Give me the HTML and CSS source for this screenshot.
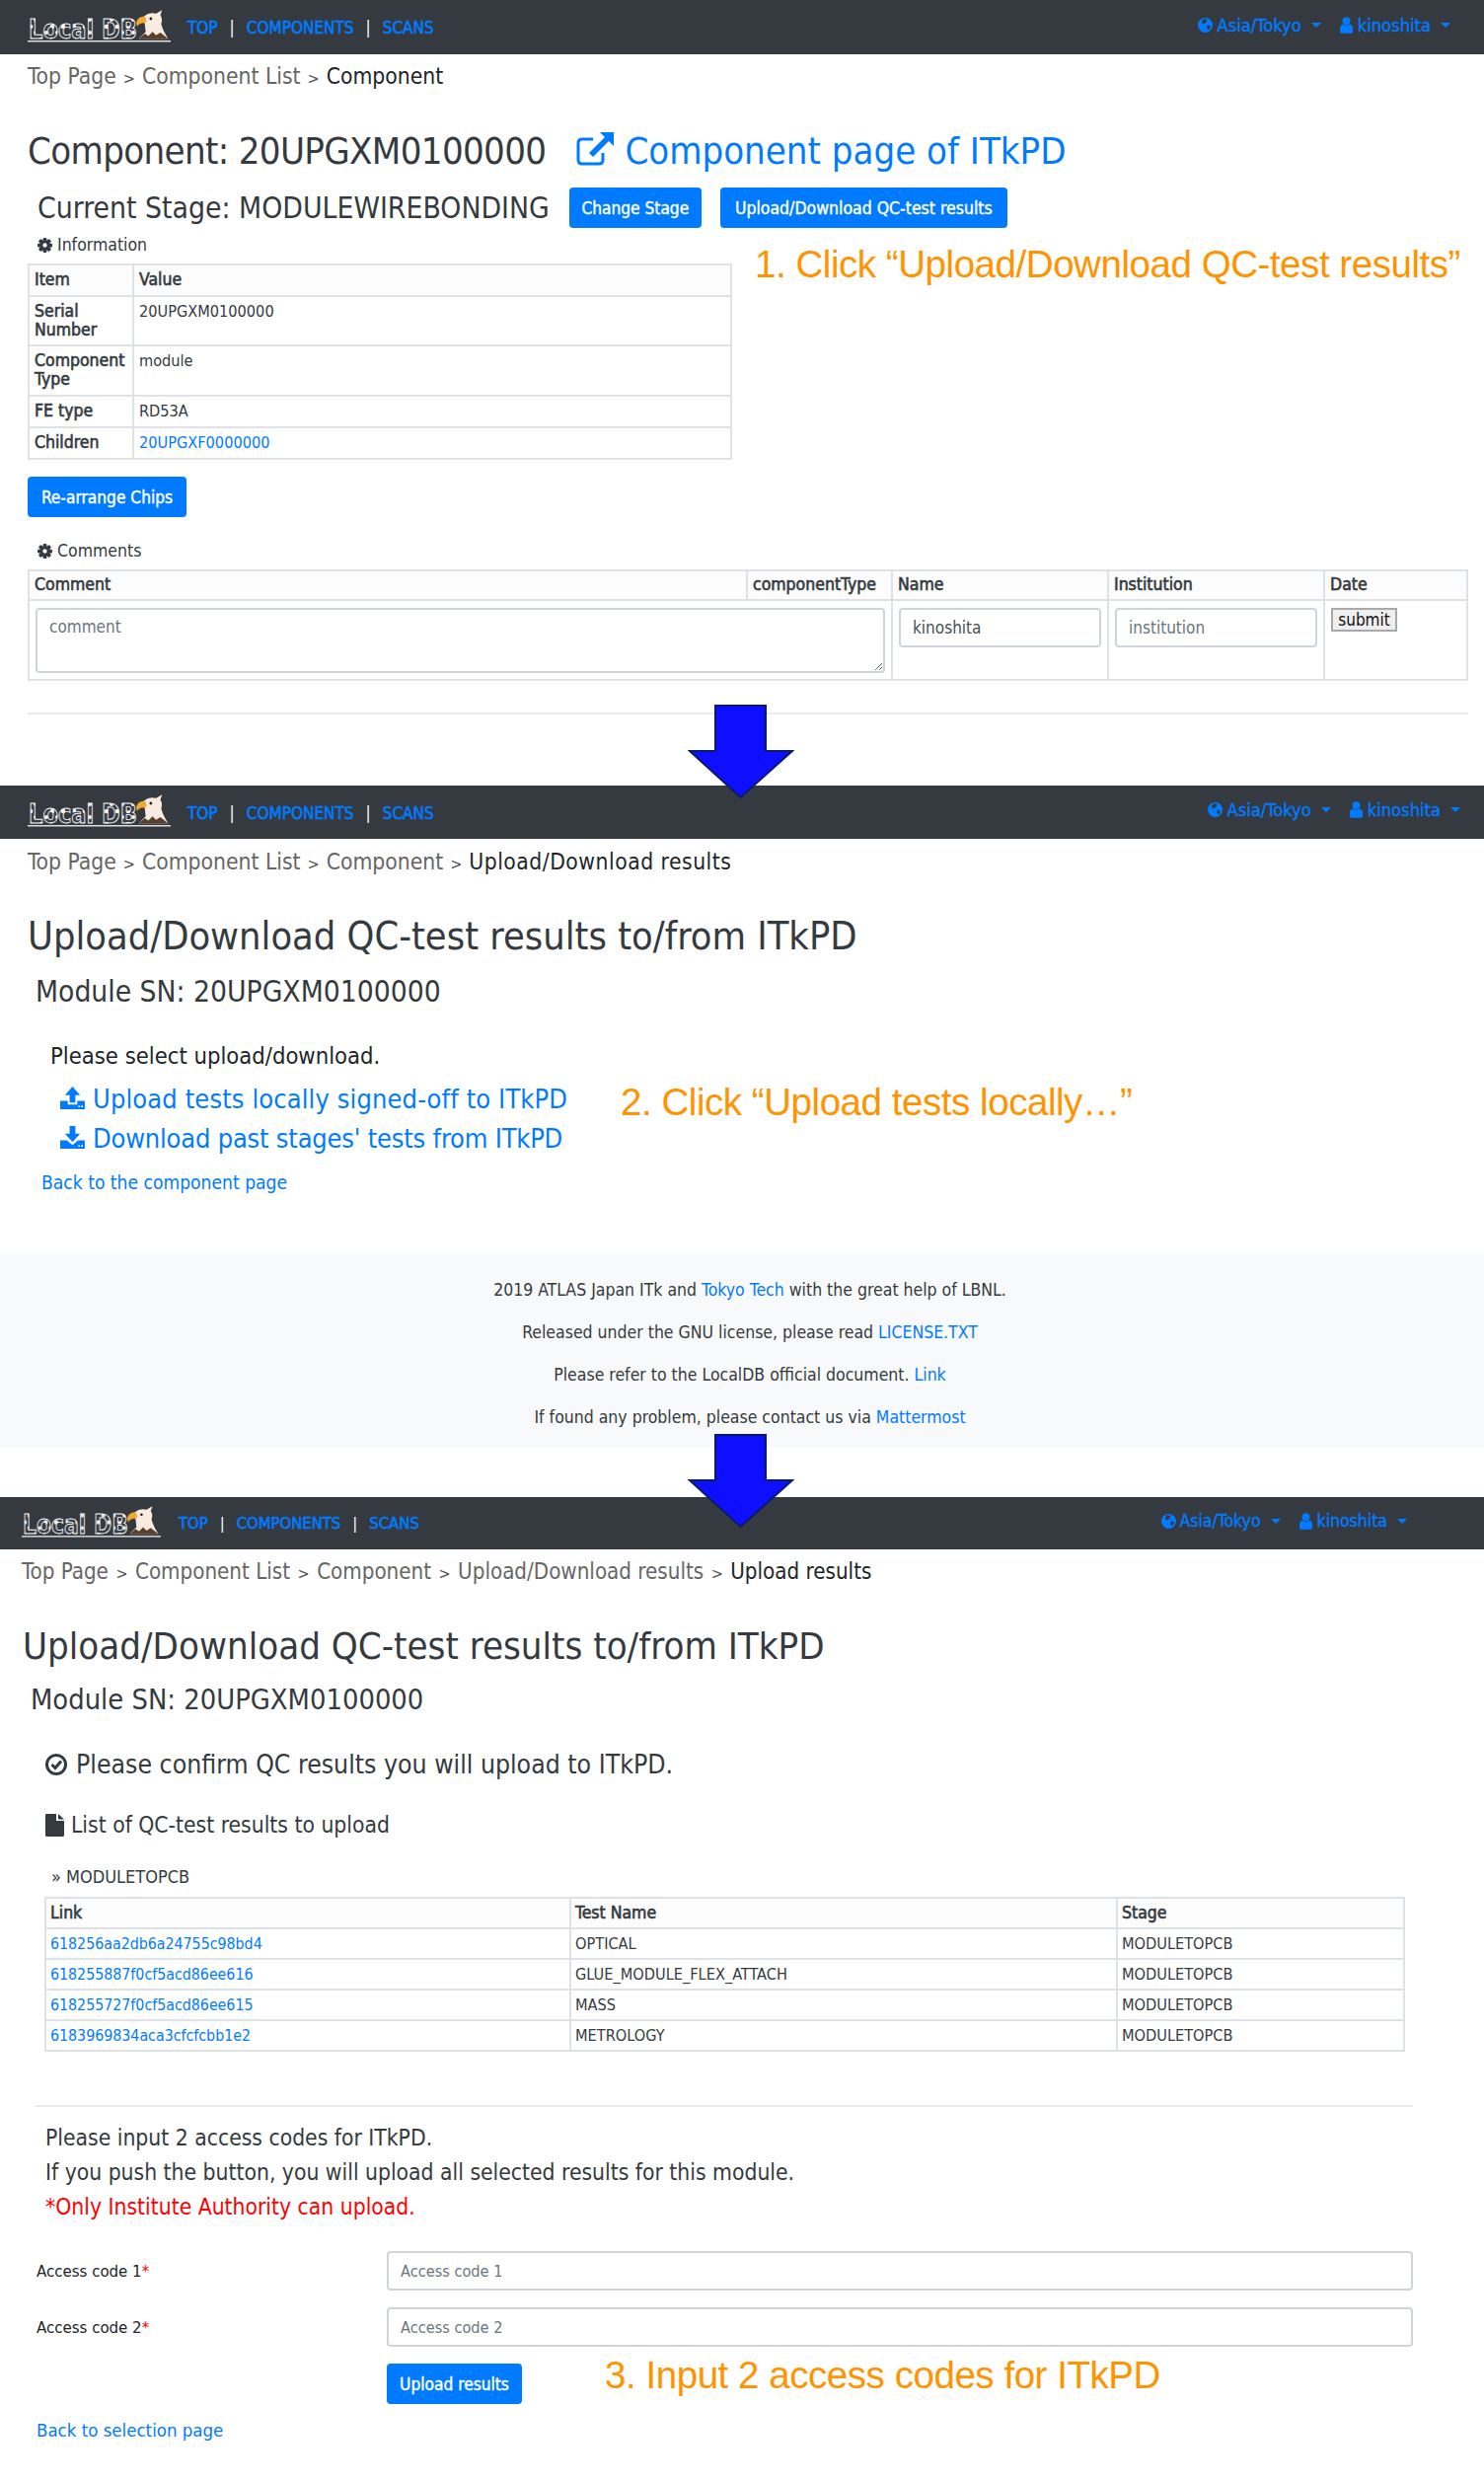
FILE: index.html
```html
<!DOCTYPE html>
<html lang="en">
<head>
<meta charset="utf-8">
<title>LocalDB upload steps</title>
<link rel="stylesheet" href="styles.css">
</head>
<body>
<svg class="defs" width="0" height="0" aria-hidden="true">
  <defs>
    <pattern id="p-blotch" width="11" height="13" patternUnits="userSpaceOnUse">
      <rect width="11" height="13" fill="#3a3f45"/>
      <circle cx="3" cy="4" r="2.300" fill="#f4f4f4"/>
      <circle cx="8" cy="10" r="2" fill="#f4f4f4"/>
    </pattern>
  </defs>
  <symbol id="i-eagle" viewBox="0 0 40 36">
    <path d="M3 33 L11 25 L10 16 L7 11 L9 7 Q15 2 23 4 L30 0 L28 6 Q31 10 29 16 Q31 24 37 33 Z" fill="#f9ebdf"/>
    <path d="M10 7 Q2 7 0 14 L1 19 Q4 14 11 15 Q13 11 10 7 Z" fill="#f2a72e"/>
    <circle cx="17" cy="10" r="1.600" fill="#222"/>
    <path d="M3 33 L10 27 L14 30 L19 25 L23 29 L28 26 L37 33 Z" fill="#5b3f2b"/>
  </symbol>
  <symbol id="i-ext" viewBox="0 0 38 34">
    <path d="M27 21 V28 Q27 32 23 32 H6 Q2 32 2 28 V11 Q2 7 6 7 H17" fill="none" stroke="currentColor" stroke-width="3"/>
    <path d="M24 0 H38 V14 L33 9 L17 25 L13 21 L29 5 Z" fill="currentColor"/>
  </symbol>
  <symbol id="i-cog" viewBox="0 0 16 16">
    <g fill="#343a40">
      <rect x="6" y="0" width="4" height="16" rx="1"/>
      <rect x="6" y="0" width="4" height="16" rx="1" transform="rotate(45 8 8)"/>
      <rect x="6" y="0" width="4" height="16" rx="1" transform="rotate(90 8 8)"/>
      <rect x="6" y="0" width="4" height="16" rx="1" transform="rotate(135 8 8)"/>
      <circle cx="8" cy="8" r="5.600"/>
    </g>
    <circle cx="8" cy="8" r="2.300" fill="#fff"/>
  </symbol>
  <symbol id="i-globe" viewBox="0 0 16 16">
    <circle cx="8" cy="8" r="8" fill="#007bff"/>
    <path d="M6 1 L10 2 L9 5 L6 7 L4 5 Z M10 8 L14 9 L12 13 L10 12 Z" fill="#343a40"/>
  </symbol>
  <symbol id="i-user" viewBox="0 0 14 18">
    <circle cx="7" cy="4.400" r="4.200" fill="#007bff"/>
    <path d="M2.500 8 Q7 10.500 11.500 8 Q14 9 14 13 V16 Q14 18 12 18 H2 Q0 18 0 16 V13 Q0 9 2.500 8 Z" fill="#007bff"/>
  </symbol>
  <symbol id="i-up" viewBox="0 0 26 24">
    <path d="M13 0 L21 9 H16 V17 H10 V9 H5 Z" fill="#007bff"/>
    <path d="M0 15 H8 V19 H18 V15 H26 V24 H0 Z" fill="#007bff"/>
    <circle cx="20" cy="21" r="1" fill="#fff"/><circle cx="23" cy="21" r="1" fill="#fff"/>
  </symbol>
  <symbol id="i-down" viewBox="0 0 26 24">
    <path d="M13 17 L21 8 H16 V0 H10 V8 H5 Z" fill="#007bff"/>
    <path d="M0 15 H7 L13 20 L19 15 H26 V24 H0 Z" fill="#007bff"/>
    <circle cx="20" cy="21" r="1" fill="#fff"/><circle cx="23" cy="21" r="1" fill="#fff"/>
  </symbol>
  <symbol id="i-check" viewBox="0 0 22 22">
    <circle cx="11" cy="11" r="9.500" fill="none" stroke="#343a40" stroke-width="3"/>
    <path d="M6.500 11 L10 14.500 L16 7.500" fill="none" stroke="#343a40" stroke-width="3"/>
  </symbol>
  <symbol id="i-file" viewBox="0 0 19 23">
    <path d="M1 0 H11 V7 H19 V21.500 Q19 23 17.500 23 H1.500 Q0 23 0 21.500 V1 Q0 0 1 0 Z M13 0 L19 5.500 H13 Z" fill="#343a40"/>
  </symbol>
  <symbol id="i-arrow" viewBox="0 0 108 96">
    <path d="M28 1 H79 V47 H106 L53.500 94 L2 47 H28 Z" fill="#0f0fff" stroke="#0a1a6b" stroke-width="2"/>
  </symbol>
</svg>

<div class="sheet">
  <section class="shot shot-a">
    <nav class="navbar">
      <a class="brand"><svg class="logo" viewBox="0 0 145 36"><text class="logo-text" x="1" y="29" textLength="110" lengthAdjust="spacingAndGlyphs">Local DB</text><rect x="0" y="31" width="145" height="1.500" fill="#ddd"/><use href="#i-eagle" x="110" y="0" width="35" height="32"/></svg></a>
      <div class="nav-links"><a>TOP</a><span class="sep">|</span><a>COMPONENTS</a><span class="sep">|</span><a>SCANS</a></div>
      <div class="nav-right">
        <a class="nav-drop"><svg class="ic-globe"><use href="#i-globe"/></svg>Asia/Tokyo<i class="caret"></i></a>
        <a class="nav-drop"><svg class="ic-user"><use href="#i-user"/></svg>kinoshita<i class="caret"></i></a>
      </div>
    </nav>
    <div class="crumbs"><a>Top Page</a><b>&gt;</b><a>Component List</a><b>&gt;</b><span>Component</span></div>
    <h1 class="title title-a"><span class="tight">Component: 20UPGXM0100000</span><a class="ext-link"><svg class="ic-ext"><use href="#i-ext"/></svg>Component page of ITkPD</a></h1>
    <div class="stage-row">
      <h2 class="stage">Current Stage: MODULEWIREBONDING</h2>
      <a class="btn btn-change">Change Stage</a>
      <a class="btn btn-updown">Upload/Download QC-test results</a>
    </div>
    <div class="label label-info"><svg class="ic-cog"><use href="#i-cog"/></svg>Information</div>
    <table class="tbl tbl-info">
      <colgroup><col class="c-item"><col></colgroup>
      <tr class="r32 head"><th>Item</th><th>Value</th></tr>
      <tr class="r50"><th>Serial Number</th><td>20UPGXM0100000</td></tr>
      <tr class="r51"><th>Component Type</th><td>module</td></tr>
      <tr class="r32"><th>FE type</th><td>RD53A</td></tr>
      <tr class="r32"><th>Children</th><td><a>20UPGXF0000000</a></td></tr>
    </table>
    <a class="btn btn-chips">Re-arrange Chips</a>
    <div class="label label-comments"><svg class="ic-cog"><use href="#i-cog"/></svg>Comments</div>
    <table class="tbl tbl-comments">
      <colgroup><col class="c-comment"><col class="c-type"><col class="c-name"><col class="c-name"><col></colgroup>
      <tr class="r30 head"><th>Comment</th><th>componentType</th><th>Name</th><th>Institution</th><th>Date</th></tr>
      <tr class="r81">
        <td colspan="2"><textarea class="field area" placeholder="comment"></textarea></td>
        <td><input class="field" value="kinoshita"></td>
        <td><input class="field" placeholder="institution"></td>
        <td><button class="submit">submit</button></td>
      </tr>
    </table>
    <hr class="rule rule-a">
  </section>

  <section class="shot shot-b">
    <nav class="navbar">
      <a class="brand"><svg class="logo" viewBox="0 0 145 36"><text class="logo-text" x="1" y="29" textLength="110" lengthAdjust="spacingAndGlyphs">Local DB</text><rect x="0" y="31" width="145" height="1.500" fill="#ddd"/><use href="#i-eagle" x="110" y="0" width="35" height="32"/></svg></a>
      <div class="nav-links"><a>TOP</a><span class="sep">|</span><a>COMPONENTS</a><span class="sep">|</span><a>SCANS</a></div>
      <div class="nav-right">
        <a class="nav-drop"><svg class="ic-globe"><use href="#i-globe"/></svg>Asia/Tokyo<i class="caret"></i></a>
        <a class="nav-drop"><svg class="ic-user"><use href="#i-user"/></svg>kinoshita<i class="caret"></i></a>
      </div>
    </nav>
    <div class="crumbs"><a>Top Page</a><b>&gt;</b><a>Component List</a><b>&gt;</b><a>Component</a><b>&gt;</b><span>Upload/Download results</span></div>
    <h1 class="title">Upload/Download QC-test results to/from ITkPD</h1>
    <h2 class="module">Module SN: 20UPGXM0100000</h2>
    <p class="select-note">Please select upload/download.</p>
    <a class="big-link big-up"><svg class="ic-load"><use href="#i-up"/></svg>Upload tests locally signed-off to ITkPD</a>
    <a class="big-link big-down"><svg class="ic-load"><use href="#i-down"/></svg>Download past stages' tests from ITkPD</a>
    <a class="back back-b">Back to the component page</a>
    <footer class="foot">
      <p>2019 ATLAS Japan ITk and <a>Tokyo Tech</a> with the great help of LBNL.</p>
      <p>Released under the GNU license, please read <a>LICENSE.TXT</a></p>
      <p>Please refer to the LocalDB official document. <a>Link</a></p>
      <p>If found any problem, please contact us via <a>Mattermost</a></p>
    </footer>
  </section>

  <section class="shot shot-c">
    <nav class="navbar">
      <a class="brand"><svg class="logo" viewBox="0 0 145 36"><text class="logo-text" x="1" y="29" textLength="110" lengthAdjust="spacingAndGlyphs">Local DB</text><rect x="0" y="31" width="145" height="1.500" fill="#ddd"/><use href="#i-eagle" x="110" y="0" width="35" height="32"/></svg></a>
      <div class="nav-links"><a>TOP</a><span class="sep">|</span><a>COMPONENTS</a><span class="sep">|</span><a>SCANS</a></div>
      <div class="nav-right">
        <a class="nav-drop"><svg class="ic-globe"><use href="#i-globe"/></svg>Asia/Tokyo<i class="caret"></i></a>
        <a class="nav-drop"><svg class="ic-user"><use href="#i-user"/></svg>kinoshita<i class="caret"></i></a>
      </div>
    </nav>
    <div class="crumbs"><a>Top Page</a><b>&gt;</b><a>Component List</a><b>&gt;</b><a>Component</a><b>&gt;</b><a>Upload/Download results</a><b>&gt;</b><span>Upload results</span></div>
    <h1 class="title">Upload/Download QC-test results to/from ITkPD</h1>
    <h2 class="module">Module SN: 20UPGXM0100000</h2>
    <h3 class="confirm"><svg class="ic-check"><use href="#i-check"/></svg>Please confirm QC results you will upload to ITkPD.</h3>
    <h4 class="listing"><svg class="ic-file"><use href="#i-file"/></svg>List of QC-test results to upload</h4>
    <div class="stage-name">» MODULETOPCB</div>
    <table class="tbl tbl-tests">
      <colgroup><col class="c-link"><col class="c-test"><col></colgroup>
      <tr class="r31 head"><th>Link</th><th>Test Name</th><th>Stage</th></tr>
      <tr class="r31"><td><a>618256aa2db6a24755c98bd4</a></td><td>OPTICAL</td><td>MODULETOPCB</td></tr>
      <tr class="r31"><td><a>618255887f0cf5acd86ee616</a></td><td>GLUE_MODULE_FLEX_ATTACH</td><td>MODULETOPCB</td></tr>
      <tr class="r31"><td><a>618255727f0cf5acd86ee615</a></td><td>MASS</td><td>MODULETOPCB</td></tr>
      <tr class="r31"><td><a>6183969834aca3cfcfcbb1e2</a></td><td>METROLOGY</td><td>MODULETOPCB</td></tr>
    </table>
    <hr class="rule rule-c">
    <div class="notes">
      <p>Please input 2 access codes for ITkPD.</p>
      <p>If you push the button, you will upload all selected results for this module.</p>
      <p class="warn">*Only Institute Authority can upload.</p>
    </div>
    <form class="codes">
      <label class="code-label">Access code 1<em>*</em></label><input class="field code-field" placeholder="Access code 1">
      <label class="code-label">Access code 2<em>*</em></label><input class="field code-field" placeholder="Access code 2">
      <a class="btn btn-results">Upload results</a>
    </form>
    <a class="back back-c">Back to selection page</a>
  </section>

  <svg class="arrow arrow-1"><use href="#i-arrow"/></svg>
  <svg class="arrow arrow-2"><use href="#i-arrow"/></svg>
  <div class="note note-1">1. Click “Upload/Download QC-test results”</div>
  <div class="note note-2">2. Click “Upload tests locally…”</div>
  <div class="note note-3">3. Input 2 access codes for ITkPD</div>
</div>
</body>
</html>
```

FILE: styles.css
```css
* { box-sizing: border-box; }
html, body { margin: 0; padding: 0; background: #fff; }
body {
  font-family: "DejaVu Sans Condensed", "DejaVu Sans", sans-serif;
  font-stretch: condensed;
  color: #343a40;
  width: 1504px;
}
a { color: #007bff; text-decoration: none; }
p { margin: 0; }
.defs { position: absolute; }
.sheet { position: relative; height: 2514px; overflow: hidden; }

/* navbar */
.navbar {
  display: flex;
  align-items: center;
  height: 55px;
  background: #343a40;
  padding-left: 28px;
}
.logo { display: block; width: 145px; height: 36px; }
.logo-text {
  font-family: "DejaVu Sans", sans-serif;
  font-weight: 700;
  font-size: 27px;
  fill: url(#p-blotch);
  stroke: #f2f2f2;
  stroke-width: 0.900;
}
.nav-links {
  display: flex;
  align-items: center;
  margin-left: 17px;
  margin-top: 0;
  font-size: 17px;
  line-height: 24px;
}
.nav-links a { -webkit-text-stroke: 0.600px #007bff; }
.sep { color: #fff; margin: 0 12px; }
.nav-right {
  display: flex;
  gap: 19px;
  margin-left: auto;
  padding-right: 34px;
  margin-top: -4px;
  font-size: 18.200px;
  line-height: 24px;
}
.nav-drop { display: flex; align-items: center; -webkit-text-stroke: 0.400px #007bff; }
.ic-globe { width: 15px; height: 15px; margin-right: 4px; }
.ic-user { width: 13px; height: 17px; margin-right: 5px; }
.caret {
  width: 0; height: 0;
  margin-left: 10px;
  border-top: 5px solid #007bff;
  border-left: 5px solid transparent;
  border-right: 5px solid transparent;
}

/* page text */
.crumbs { margin: 7px 0 0 28px; font-size: 22.700px; line-height: 30px; color: #212529; white-space: nowrap; }
.crumbs a { color: #666; }
.crumbs b { font-weight: 400; color: #555; margin: 0 7px; font-size: 16px; }
.title { margin: 34px 0 0 28px; font-size: 39.400px; line-height: 48px; font-weight: 400; color: #343a40; white-space: nowrap; }
.title-a { display: flex; align-items: center; font-size: 38px; }
.tight { letter-spacing: -0.650px; }
.ext-link { display: flex; align-items: center; margin-left: 31px; }
.ic-ext { width: 38px; height: 34px; margin-right: 11px; margin-top: -5px; color: #007bff; }
.stage-row { display: flex; align-items: center; margin: 13px 0 0 38px; }
.stage { margin: 0 20px 0 0; font-size: 29.800px; line-height: 41px; font-weight: 400; white-space: nowrap; }
.btn {
  display: inline-flex;
  align-items: center;
  justify-content: center;
  height: 41px;
  background: #007bff;
  color: #fff;
  border-radius: 4px;
  font-size: 17.200px;
  -webkit-text-stroke: 0.400px #fff;
  white-space: nowrap;
}
.btn-change { width: 134px; margin-right: 19px; }
.btn-updown { width: 291px; font-size: 17.500px; }
.label { display: flex; align-items: center; margin-left: 38px; font-size: 17.500px; line-height: 20px; }
.ic-cog { width: 15px; height: 15px; margin-right: 5px; }
.label-info { margin-top: 7px; }
.label-comments { margin-top: 24px; }

/* tables */
.tbl {
  border-collapse: collapse;
  table-layout: fixed;
  font-size: 16.200px;
  line-height: 19px;
  color: #343a40;
}
.tbl th, .tbl td {
  border: 2px solid #dee2e6;
  padding: 5px 5px;
  text-align: left;
  vertical-align: top;
}
.tbl th { font-weight: 400; font-size: 17.500px; -webkit-text-stroke: 0.600px #343a40; }
.head th { background: #fcfcfc; }
.r30 { height: 30px; }
.r30 th { padding-top: 4px; padding-bottom: 4px; }
.r31 { height: 31px; }
.r32 { height: 32px; }
.r50 { height: 50px; }
.r51 { height: 51px; }
.r81 { height: 81px; }
.tbl-info { width: 714px; margin: 9px 0 0 28px; }
.c-item { width: 106px; }
.btn-chips { display: flex; width: 161px; margin: 17px 0 0 28px; }
.tbl-comments { width: 1460px; margin: 9px 0 0 28px; }
.c-comment { width: 728px; }
.c-type { width: 147px; }
.c-name { width: 219px; }
.tbl-comments td { padding: 7px 6px 6px; }
.field {
  display: block;
  width: 100%;
  height: 40px;
  border: 2px solid #ced4da;
  border-radius: 4px;
  padding: 0 12px;
  font: inherit;
  font-size: 17px;
  color: #495057;
  background: #fff;
}
.field::placeholder { color: #6c757d; opacity: 1; }
.area { height: 66px; padding-top: 8px; resize: both; }
.submit {
  display: block;
  width: 67px;
  height: 24px;
  padding: 0;
  border: 2px solid #a9a9a9;
  background: #efefef;
  color: #111;
  font: inherit;
  font-size: 17px;
  line-height: 18px;
}
.rule { height: 2px; border: 0; background: #e9ecef; }
.rule-a { margin: 32px 16px 0 28px; }

/* second shot */
.shot-b { margin-top: 72px; }
.shot-b .navbar { height: 54px; }
.shot-b .nav-links { margin-top: 1px; }
.shot-b .nav-right { padding-right: 24px; margin-top: -5px; }
.shot-b .crumbs { margin-top: 8px; }
.shot-b .crumbs span { letter-spacing: 0.500px; }
.shot-b .title { margin-top: 33px; }
.module { margin: 13px 0 0 36px; font-size: 29.700px; line-height: 40px; font-weight: 400; }
.select-note { margin: 30px 0 0 51px; font-size: 23.600px; line-height: 30px; color: #212529; }
.big-link { display: flex; align-items: center; margin-left: 61px; font-size: 27px; line-height: 40px; }
.big-up { margin-top: 9px; letter-spacing: 0.120px; }
.big-down { letter-spacing: -0.200px; }
.ic-load { width: 25px; height: 23px; margin-right: 8px; margin-top: -4px; }
.back { display: block; line-height: 24px; font-size: 19.100px; }
.back-b { margin: 13px 0 0 42px; }
.foot {
  margin-top: 60px;
  height: 195px;
  padding: 25px 0 0 16px;
  background: #f8f9fa;
  text-align: center;
  font-size: 17.500px;
  line-height: 22px;
}
.foot p { margin-bottom: 21px; }

/* third shot */
.shot-c { margin-top: 51px; }
.shot-c .navbar { height: 53px; padding-left: 22px; }
.shot-c .logo { width: 141px; height: 35px; }
.shot-c .nav-links { margin-left: 18px; font-size: 16.500px; }
.shot-c .nav-right { padding-right: 78px; font-size: 17.500px; margin-top: -5px; }
.shot-c .crumbs { margin: 7px 0 0 22px; font-size: 22.200px; }
.shot-c .crumbs b { margin: 0 7.500px; }
.shot-c .title { margin: 34px 0 0 23px; font-size: 38.100px; }
.shot-c .module { margin: 10px 0 0 31px; font-size: 28.800px; }
.confirm { margin: 29px 0 0 46px; display: flex; align-items: center; font-size: 26.400px; line-height: 34px; font-weight: 400; }
.ic-check { width: 22px; height: 22px; margin-right: 9px; }
.listing { margin: 29px 0 0 46px; display: flex; align-items: center; font-size: 22.700px; line-height: 30px; font-weight: 400; }
.ic-file { width: 19px; height: 23px; margin-right: 7px; }
.stage-name { margin: 26px 0 0 52px; font-size: 18px; line-height: 24px; }
.tbl-tests { width: 1379px; margin: 8px 0 0 45px; }
.tbl-tests td, .tbl-tests th { padding-left: 4px; }
.tbl-tests a { font-size: 15.800px; }
.c-link { width: 532px; }
.c-test { width: 554px; }
.rule-c { margin: 54px 72px 0 36px; }
.notes { margin: 14px 0 0 46px; font-size: 22.700px; line-height: 35px; }
.warn { color: #f00; }
.codes {
  display: grid;
  grid-template-columns: 355px 1040px;
  row-gap: 17px;
  align-items: center;
  margin: 27px 0 0 37px;
}
.code-label { font-size: 16.700px; line-height: 24px; color: #212529; }
.code-label em { color: #f00; font-style: normal; }
.code-field { height: 40px; font-size: 16.200px; }
.btn-results { grid-column: 2; width: 137px; }
.back-c { margin: 15px 0 0 37px; font-size: 18.500px; }

/* overlays */
.arrow { position: absolute; width: 108px; height: 96px; }
.arrow-1 { left: 697px; top: 714px; }
.arrow-2 { left: 697px; top: 1453px; }
.note {
  position: absolute;
  font-family: "Liberation Sans", Arial, sans-serif;
  font-stretch: normal;
  font-size: 38.500px;
  letter-spacing: -0.450px;
  line-height: 46px;
  color: #ff9300;
  white-space: nowrap;
}
.note-1 { left: 765px; top: 245px; }
.note-2 { left: 629px; top: 1094px; }
.note-3 { left: 613px; top: 2384px; }
```
